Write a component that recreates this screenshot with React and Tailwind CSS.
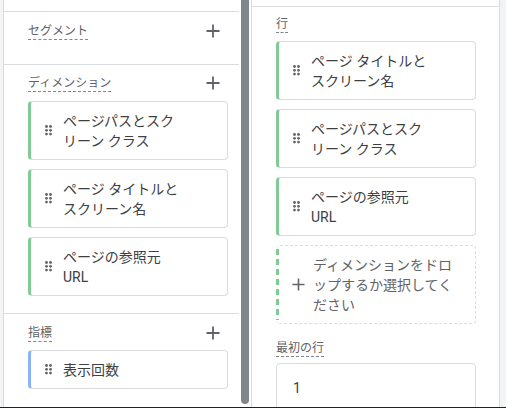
import React from 'react'

const GREEN = 'border-l-[#81c995]'

function Grip() {
  return (
    <svg width="8" height="11" viewBox="0 0 8 11" className="flex-shrink-0 text-[#5f6368]">
      {[1.5, 5.5].map((x) =>
        [1.5, 5.3, 9.1].map((y) => <circle key={`${x}-${y}`} cx={x} cy={y} r="1.4" fill="currentColor" />)
      )}
    </svg>
  )
}

function Plus({ size = 14, stroke = 1.8 }) {
  return (
    <svg width={size} height={size} viewBox="0 0 14 14" className="flex-shrink-0 text-[#5f6368]">
      <path d="M7 0.5v13M0.5 7h13" stroke="currentColor" strokeWidth={stroke} fill="none" />
    </svg>
  )
}

function Label({ children }) {
  return (
    <span className="inline-block text-[12px] leading-[16px] text-[#5f6368] border-b border-dashed border-[#80868b]">
      {children}
    </span>
  )
}

function Header({ label, add = true, className = '' }) {
  return (
    <div className={`flex items-center justify-between h-[24px] ${className}`}>
      <Label>{label}</Label>
      {add && <Plus />}
    </div>
  )
}

function Chip({ lines, color = GREEN, height = 'h-[59px]' }) {
  return (
    <div className={`flex items-center w-[200px] ${height} bg-white border border-[#dadce0] border-l-[3px] ${color} rounded-[4px] pl-[14px]`}>
      <Grip />
      <div className="ml-[10px] text-[14px] leading-[20px] text-[#3c4043]">
        {lines.map((l) => (
          <div key={l}>{l}</div>
        ))}
      </div>
    </div>
  )
}

export default function App() {
  return (
    <div className="w-[506px] h-[408px] overflow-hidden bg-[#f1f3f4] font-['Roboto','Noto_Sans_CJK_JP',sans-serif]">
      <div className="flex h-[407px]">
        <div className="w-[3px] shrink-0" />

        {/* Left: settings column */}
        <div className="w-[236px] shrink-0 bg-white border-l border-[#dadce0]">
          <div className="h-[12px] border-b border-[#dadce0]" />

          <div className="h-[53px] border-b border-[#dadce0] pl-[24px] pr-[19px] pt-[7px]">
            <Header label="セグメント" />
          </div>

          <div className="border-b border-[#dadce0] pl-[24px] pr-[19px] pt-[6px] pb-[17px]">
            <Header label="ディメンション" />
            <div className="mt-[6px] flex flex-col gap-[9px]">
              <Chip lines={['ページパスとスク', 'リーン クラス']} />
              <Chip lines={['ページ タイトルと', 'スクリーン名']} />
              <Chip lines={['ページの参照元', 'URL']} />
            </div>
          </div>

          <div className="pl-[24px] pr-[19px] pt-[7px]">
            <Header label="指標" />
            <div className="mt-[5px]">
              <Chip lines={['表示回数']} color="border-l-[#8ab4f8]" height="h-[39px]" />
            </div>
          </div>
        </div>

        {/* Scrollbar */}
        <div className="w-[12px] shrink-0 bg-white px-[2px] pb-[3px]">
          <div className="h-full w-[8px] bg-[#80868b] rounded-b-full" />
        </div>

        {/* Right: table settings column */}
        <div className="w-[249px] shrink-0 bg-white border-l border-r border-[#dadce0] overflow-hidden">
          <div className="h-[7px] border-b border-[#dadce0]" />
          <div className="pl-[24px] pt-[5px]">
            <Header label="行" add={false} />
            <div className="mt-[5px] flex flex-col gap-[9px]">
              <Chip lines={['ページ タイトルと', 'スクリーン名']} />
              <Chip lines={['ページパスとスク', 'リーン クラス']} />
              <Chip lines={['ページの参照元', 'URL']} />

              <div className="flex w-[200px] h-[79px] border border-dashed border-[#dadce0] border-l-0 rounded-[4px]">
                <div className="w-[3px] py-[3px]">
                  <div className="h-full w-[3px] bg-[repeating-linear-gradient(to_bottom,#81c995_0_6px,transparent_6px_10px)]" />
                </div>
                <div className="flex items-center pl-[13px]">
                  <Plus size={13} stroke={1.7} />
                  <div className="ml-[8px] text-[14px] leading-[20px] text-[#5f6368]">
                    <div>ディメンションをドロ</div>
                    <div>ップするか選択してく</div>
                    <div>ださい</div>
                  </div>
                </div>
              </div>
            </div>

            <Header label="最初の行" add={false} className="mt-[12px]" />
            <div className="mt-[3px] w-[200px] h-[50px] border border-[#dadce0] rounded-[4px] flex items-center pl-[16px] text-[14px] text-[#3c4043]">
              1
            </div>
          </div>
        </div>
      </div>
      <div className="h-[1px] bg-[#202124]" />
    </div>
  )
}
